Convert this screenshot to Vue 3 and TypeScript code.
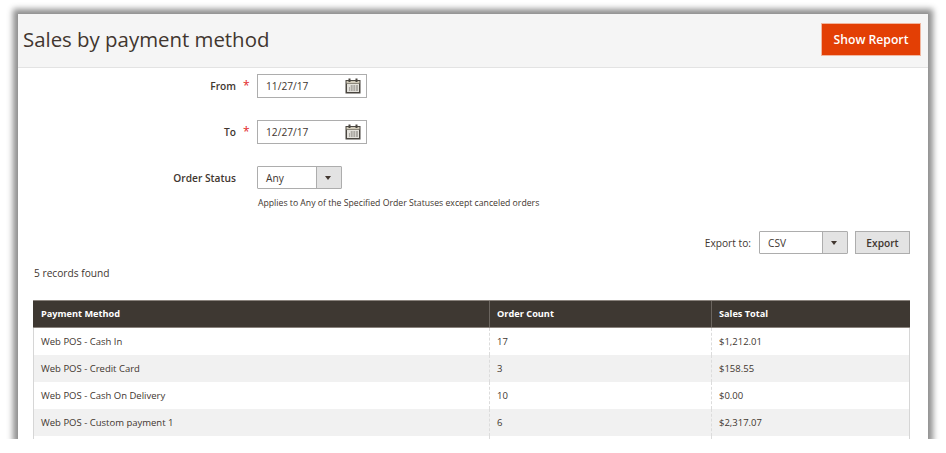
<template>
  <div class="frame">
    <header class="page-head">
      <h1>Sales by payment method</h1>
      <button class="primary">Show Report</button>
    </header>

    <div class="content">
      <form class="filter">
        <div class="field date-field">
          <label>From</label>
          <span class="star">*</span>
          <div class="date-input">
            <span>11/27/17</span>
            <svg width="16" height="16" viewBox="0 0 16 16">
              <use href="#cal" />
            </svg>
          </div>
        </div>
        <div class="field date-field">
          <label>To</label>
          <span class="star">*</span>
          <div class="date-input">
            <span>12/27/17</span>
            <svg width="16" height="16" viewBox="0 0 16 16">
              <use href="#cal" />
            </svg>
          </div>
        </div>
        <div class="field">
          <label>Order Status</label>
          <span class="star"></span>
          <div class="select status-select">
            <span>Any</span>
            <i class="select-arrow"></i>
          </div>
        </div>
        <p class="note">Applies to Any of the Specified Order Statuses except canceled orders</p>
      </form>

      <div class="export-row">
        <span>Export to:</span>
        <div class="select export-select">
          <span>CSV</span>
          <i class="select-arrow"></i>
        </div>
        <button class="secondary">Export</button>
      </div>

      <div class="records">{{ recordCount }} records found</div>

      <table>
        <thead>
          <tr>
            <th>Payment Method</th>
            <th>Order Count</th>
            <th>Sales Total</th>
          </tr>
        </thead>
        <tbody>
          <tr v-for="row in rows" :key="row.method">
            <td>{{ row.method }}</td>
            <td>{{ row.count }}</td>
            <td>{{ row.total }}</td>
          </tr>
          <!-- fifth record is cut off by the frame -->
          <tr>
            <td></td>
            <td></td>
            <td></td>
          </tr>
        </tbody>
      </table>
    </div>

    <svg class="defs" width="0" height="0">
      <defs>
        <g id="cal">
          <rect x="0.5" y="2" width="15" height="13.5" fill="#4a4640" />
          <rect x="1.5" y="3" width="13" height="2.5" fill="#cfc9b8" />
          <rect x="2" y="6" width="12" height="8" fill="#e4e2dc" />
          <rect x="3.5" y="0.5" width="2" height="3.5" fill="#4a4640" />
          <rect x="10.5" y="0.5" width="2" height="3.5" fill="#4a4640" />
          <path d="M5 8h8M4 10h9M4 12h9" stroke="#77726c" stroke-width="1" />
          <path d="M5.5 7v6M8 7v6M10.5 7v6" stroke="#e4e2dc" stroke-width="0.7" />
        </g>
      </defs>
    </svg>
  </div>
</template>

<script setup lang="ts">
interface ReportRow {
  method: string
  count: number
  total: string
}

const recordCount = 5

const rows: ReportRow[] = [
  { method: 'Web POS - Cash In', count: 17, total: '$1,212.01' },
  { method: 'Web POS - Credit Card', count: 3, total: '$158.55' },
  { method: 'Web POS - Cash On Delivery', count: 10, total: '$0.00' },
  { method: 'Web POS - Custom payment 1', count: 6, total: '$2,317.07' },
]
</script>

<style>
html,
body {
  background: #fff;
  overflow: hidden;
}
</style>

<style scoped>
.frame {
  width: 910px;
  height: 425px;
  margin: 14px 0 0 18px;
  background: #fff;
  overflow: hidden;
  position: relative;
  box-shadow: 0 0 6px 5px #8f8f8f;
  font-family: "Open Sans", sans-serif;
  font-size: 10.2px;
  color: #41362f;
}

.page-head {
  height: 54px;
  box-sizing: border-box;
  background: #f5f5f5;
  border-bottom: 1px solid #e3e3e3;
  display: flex;
  align-items: flex-start;
  justify-content: space-between;
  padding: 9px 7px 0 5px;
}

h1 {
  margin: 0;
  font-size: 20.4px;
  font-weight: 400;
  line-height: 33px;
  color: #41362f;
}

.primary {
  width: 100px;
  height: 33px;
  background: #e33f05;
  border: 1px solid #f1b69f;
  color: #fff;
  font: 600 12.2px "Open Sans", sans-serif;
  padding: 0;
}

.filter {
  padding-top: 6px;
}

.field {
  display: flex;
  align-items: center;
  height: 24px;
  margin-bottom: 22px;
}

.field label {
  width: 218px;
  text-align: right;
  font-weight: 600;
}

.star {
  width: 21px;
  padding-left: 7px;
  color: #e22626;
  font-size: 12px;
  line-height: 12px;
  box-sizing: border-box;
}

.date-input {
  width: 110px;
  height: 24px;
  box-sizing: border-box;
  border: 1px solid #adadad;
  background: #fff;
  padding: 0 5px 0 8px;
  display: flex;
  align-items: center;
  justify-content: space-between;
}

.select {
  height: 23px;
  box-sizing: border-box;
  border: 1px solid #adadad;
  border-radius: 1px;
  display: flex;
  align-items: center;
  justify-content: space-between;
  padding-left: 8px;
  background: #fff;
}

.status-select {
  width: 85px;
  align-self: flex-start;
}

.export-select {
  width: 89px;
}

.select-arrow {
  width: 24px;
  height: 100%;
  background: #e3e3e3;
  border-left: 1px solid #adadad;
  position: relative;
  flex-shrink: 0;
}

.select-arrow::after {
  content: "";
  position: absolute;
  left: 8px;
  top: 9px;
  border-style: solid;
  border-width: 4px 3px 0;
  border-color: #41362f transparent transparent;
}

.note {
  margin: -16px 0 0 240px;
  font-size: 8.7px;
  line-height: 14px;
}

.export-row {
  display: flex;
  align-items: center;
  justify-content: flex-end;
  margin: 21px 18px 0 0;
  height: 23px;
}

.export-row > span {
  margin-right: 8px;
}

.secondary {
  width: 55px;
  height: 23px;
  margin-left: 7px;
  padding: 0;
  background: #e3e3e3;
  border: 1px solid #adadad;
  color: #41362f;
  font: 600 10.2px "Open Sans", sans-serif;
}

.records {
  margin: 12px 0 0 16px;
  height: 14px;
  line-height: 14px;
}

table {
  margin: 20px 0 0 15px;
  width: 877px;
  border-collapse: collapse;
  table-layout: fixed;
  font-size: 9.5px;
}

th {
  height: 27px;
  box-sizing: border-box;
  background: #3e3832;
  color: #fff;
  font-size: 9.2px;
  font-weight: 700;
  text-align: left;
  padding: 0 7px 1px;
  border-left: 1px solid #6b655f;
  border-top: 1px solid #8a837d;
  border-bottom: 1px solid #8a837d;
}

th:first-child {
  width: 456px;
  border-left-color: #3e3832;
}

th:nth-child(2) {
  width: 222px;
}

td {
  height: 27px;
  box-sizing: border-box;
  padding: 0 7px;
  border-left: 1px dashed #dcdcdc;
}

td:first-child {
  border-left: 1px solid #d6d6d6;
}

td:last-child {
  border-right: 1px solid #d6d6d6;
}

tbody tr:nth-child(even) td {
  background: #f1f1f1;
}

.defs {
  position: absolute;
}
</style>
